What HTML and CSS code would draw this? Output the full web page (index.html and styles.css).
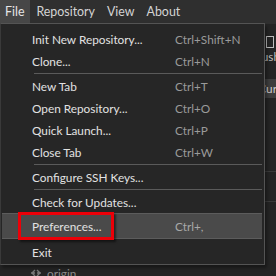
FILE: index.html
```html
<!DOCTYPE html>
<html lang="en">
<head>
    <meta charset="UTF-8">
    <title>File menu</title>
    <link rel="stylesheet" href="styles.css">
</head>
<body>
    <div class="menubar">
        <div class="menubar-item active">File</div>
        <div class="menubar-item">Repository</div>
        <div class="menubar-item">View</div>
        <div class="menubar-item">About</div>
    </div>

    <div class="workspace">
        <div class="toolbar">
            <span class="tool-icon"></span>
            <span class="tool-label">Push</span>
        </div>
        <div class="tab-row">Current</div>
        <div class="panel-line"></div>
        <div class="panel-line second"></div>
        <div class="remote-row">
            <svg class="remote-icon" width="12" height="10" viewBox="0 0 12 10">
                <path d="M1 5h4M7 5h4M5 2l-3 3 3 3M7 2l3 3-3 3" stroke="#777" stroke-width="1.4" fill="none"/>
            </svg>
            <span>origin</span>
        </div>
    </div>

    <div class="dropdown">
        <div class="item"><span>Init New Repository...</span><span class="keys">Ctrl+Shift+N</span></div>
        <div class="item"><span>Clone...</span><span class="keys">Ctrl+N</span></div>
        <div class="sep"></div>
        <div class="item"><span>New Tab</span><span class="keys">Ctrl+T</span></div>
        <div class="item"><span>Open Repository...</span><span class="keys">Ctrl+O</span></div>
        <div class="item"><span>Quick Launch...</span><span class="keys">Ctrl+P</span></div>
        <div class="item"><span>Close Tab</span><span class="keys">Ctrl+W</span></div>
        <div class="sep"></div>
        <div class="item"><span>Configure SSH Keys...</span><span class="keys"></span></div>
        <div class="sep"></div>
        <div class="item"><span>Check for Updates...</span><span class="keys"></span></div>
        <div class="item hover"><span>Preferences...</span><span class="keys">Ctrl+,</span><span class="callout"></span></div>
        <div class="item"><span>Exit</span><span class="keys"></span></div>
    </div>
</body>
</html>
```

FILE: styles.css
```css
body {
    margin: 0;
    width: 276px;
    height: 276px;
    overflow: hidden;
    background-color: #1f1f1f;
    font-family: Lato, "Noto Sans", sans-serif;
    font-size: 11.8px;
    color: #dedede;
    position: relative;
}
.menubar {
    display: flex;
    height: 24px;
    align-items: stretch;
    background-color: #2f2f2f;
}
.menubar-item {
    display: flex;
    align-items: center;
    padding: 0 6px 1px 6px;
    font-size: 12.4px;
    color: #d4d4d4;
}
.menubar-item.active {
    padding: 0 6px 1px 5px;
    background-color: #474747;
    color: #e6e6e6;
}
.workspace {
    height: 252px;
    background-color: #242424;
    display: flex;
    flex-direction: column;
}
.toolbar {
    display: flex;
    flex-direction: column;
    align-items: flex-end;
    padding: 12px 0 0 0;
    height: 32px;
}
.tool-icon {
    width: 6px;
    height: 10px;
    border: 1.5px solid #bbb;
    margin-right: 2px;
}
.tool-label {
    color: #bbb;
    margin-right: -4px;
    margin-top: 1px;
}
.tab-row {
    height: 19px;
    background-color: #3d3d3d;
    margin-top: 11px;
    text-align: right;
    margin-right: -22px;
    line-height: 19px;
    color: #ccc;
}
.panel-line {
    height: 1px;
    background-color: #3a3a3a;
    margin-top: 73px;
}
.panel-line.second {
    margin-top: 29px;
}
.remote-row {
    display: flex;
    align-items: center;
    gap: 5px;
    padding-left: 30px;
    margin-top: auto;
    height: 14px;
    color: #8a8a8a;
    margin-bottom: -4px;
}
.dropdown {
    position: absolute;
    left: 0;
    top: 23px;
    width: 263px;
    padding: 4px 0 0;
    height: 236px;
    background-color: #262626;
    border: 1px solid #545454;
    border-left-color: #3a3a3a;
    box-shadow: 2px 3px 3px rgba(0, 0, 0, 0.35);
}
.item {
    position: relative;
    display: grid;
    grid-template-columns: 143px 1fr;
    height: 22px;
    align-items: center;
    padding-left: 31px;
    color: #e2e2e2;
}
.keys {
    color: #9a9a9a;
}
.sep {
    height: 1px;
    margin: 1px 2px 1px 33px;
    background-color: #5a5a5a;
}
.item.hover {
    height: 24px;
    margin: 0 2px 2px 1px;
    padding-left: 30px;
    background-color: #4a4a4a;
    border-top: 1px solid #5c5c5c;
    border-bottom: 1px solid #5c5c5c;
}
.item.hover .keys {
    color: #a8a8a8;
}
.callout {
    position: absolute;
    left: 16px;
    top: -2px;
    width: 90px;
    height: 22px;
    border: 3px solid #ec0008;
    box-shadow: 2px 2px 2px rgba(0, 0, 0, 0.5);
}
```
